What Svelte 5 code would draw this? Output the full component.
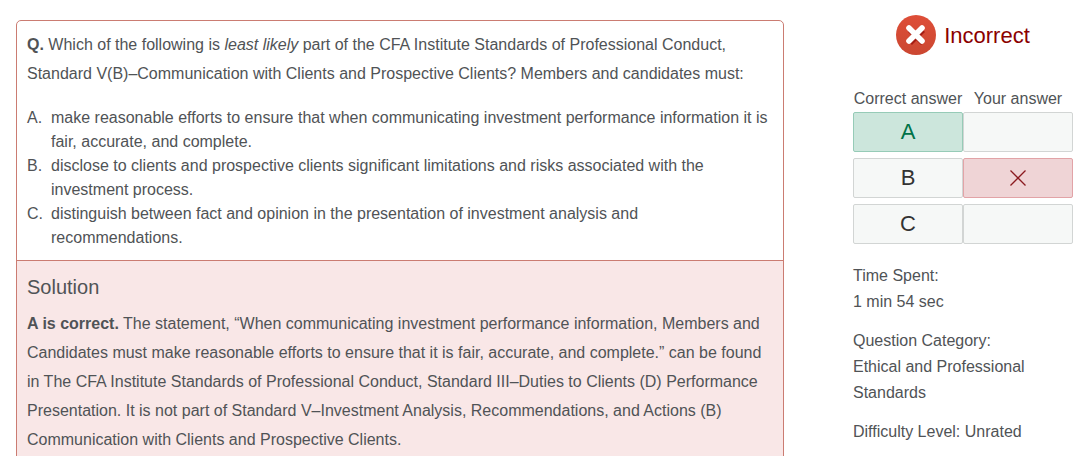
<script>
    const options = [
        'make reasonable efforts to ensure that when communicating investment performance information it is fair, accurate, and complete.',
        'disclose to clients and prospective clients significant limitations and risks associated with the investment process.',
        'distinguish between fact and opinion in the presentation of investment analysis and recommendations.'
    ];

    const letters = ['A', 'B', 'C'];
    const correct = 'A';
    const chosen = 'B';
</script>

<div class="page">
    <main class="card">
        <section class="question">
            <p><b>Q.</b> Which of the following is <em>least likely</em> part of the CFA Institute Standards of Professional Conduct, Standard V(B)–Communication with Clients and Prospective Clients? Members and candidates must:</p>
            <ol>
                {#each options as option}
                    <li><span>{option}</span></li>
                {/each}
            </ol>
        </section>
        <section class="solution">
            <h2>Solution</h2>
            <p><b>A is correct.</b> The statement, “When communicating investment performance information, Members and Candidates must make reasonable efforts to ensure that it is fair, accurate, and complete.” can be found in The CFA Institute Standards of Professional Conduct, Standard III–Duties to Clients (D) Performance Presentation. It is not part of Standard V–Investment Analysis, Recommendations, and Actions (B) Communication with Clients and Prospective Clients.</p>
        </section>
    </main>

    <aside>
        <div class="result">
            <svg width="40" height="40" viewBox="0 0 40 40" aria-hidden="true">
                <defs>
                    <linearGradient id="disc" x1="0" y1="0" x2="0" y2="1">
                        <stop offset="0" stop-color="#de4e38" />
                        <stop offset="1" stop-color="#cb4731" />
                    </linearGradient>
                </defs>
                <circle cx="20" cy="20" r="20" fill="url(#disc)" />
                <path d="M14 15 L27 28 M27 15 L14 28" stroke="#a51c12" stroke-width="5.6" />
                <path d="M13 13 L26 26 M26 13 L13 26" stroke="#fff" stroke-width="5.6" stroke-linecap="round" />
            </svg>
            <strong>Incorrect</strong>
        </div>

        <table>
            <thead>
                <tr>
                    <th scope="col">Correct answer</th>
                    <th scope="col">Your answer</th>
                </tr>
            </thead>
            <tbody>
                {#each letters as letter}
                    <tr>
                        <td class:right={letter === correct}>{letter}</td>
                        <td class:wrong={letter === chosen}>
                            {#if letter === chosen}
                                <svg width="16" height="16" viewBox="0 0 16 16" role="img" aria-label="Wrong">
                                    <path d="M0.5 0.5 L15.5 15.5 M15.5 0.5 L0.5 15.5" stroke="#8b1a1f" stroke-width="1.3" />
                                </svg>
                            {/if}
                        </td>
                    </tr>
                {/each}
            </tbody>
        </table>

        <p>Time Spent:<br />1 min 54 sec</p>
        <p>Question Category:<br />Ethical and Professional Standards</p>
        <p>Difficulty Level: Unrated</p>
    </aside>
</div>

<style>
    :global(body) {
        margin: 0;
        background: #fff;
    }
    .page {
        display: flex;
        align-items: flex-start;
        gap: 69px;
        padding: 0 15px 0 16px;
        color: #505356;
        font-family: "Liberation Sans", Arial, sans-serif;
        font-size: 16px;
    }
    p {
        margin: 0;
    }
    .card {
        flex: 1;
        min-width: 0;
        margin: 20px 0 0;
        border: 1px solid #cb7c72;
        border-radius: 5px;
        overflow: hidden;
    }
    .card p {
        line-height: 29px;
    }
    .question {
        padding: 9px 10px 10px;
    }
    ol {
        margin: 18px 0 0;
        padding: 0;
        list-style: none;
        counter-reset: option;
    }
    li {
        display: flex;
        line-height: 24px;
        counter-increment: option;
    }
    li::before {
        content: counter(option, upper-alpha) ".";
        flex: 0 0 24px;
    }
    .solution {
        padding: 14px 10px 20px;
        border-top: 1px solid #cb7c72;
        background: #f9e7e7;
    }
    h2 {
        margin: 0 0 10px;
        font-size: 20px;
        font-weight: normal;
        line-height: 24px;
    }
    aside {
        flex: 0 0 220px;
        padding-top: 15px;
    }
    .result {
        display: flex;
        align-items: center;
        justify-content: center;
        gap: 8px;
    }
    .result strong {
        padding-top: 2px;
        color: #8b0000;
        font-size: 22px;
        font-weight: normal;
    }
    table {
        width: 100%;
        margin: 28px 0 13px;
        border-collapse: separate;
        border-spacing: 0 6px;
        table-layout: fixed;
    }
    th {
        padding: 2px 0 0;
        font-weight: normal;
        line-height: 15px;
        white-space: nowrap;
    }
    td {
        box-sizing: border-box;
        height: 40px;
        padding: 0;
        border: 1px solid #d2d5d4;
        border-radius: 2px;
        background: #f6f8f7;
        color: #333;
        font-size: 22px;
        line-height: 24px;
        text-align: center;
    }
    td svg {
        display: block;
        margin: 0 auto;
    }
    .right {
        border-color: #96cbb7;
        background: #cce6dc;
        color: #007348;
    }
    .wrong {
        border-color: #e2a3a7;
        background: #efd4d6;
    }
    aside p {
        margin-bottom: 13px;
        line-height: 26px;
    }
</style>
